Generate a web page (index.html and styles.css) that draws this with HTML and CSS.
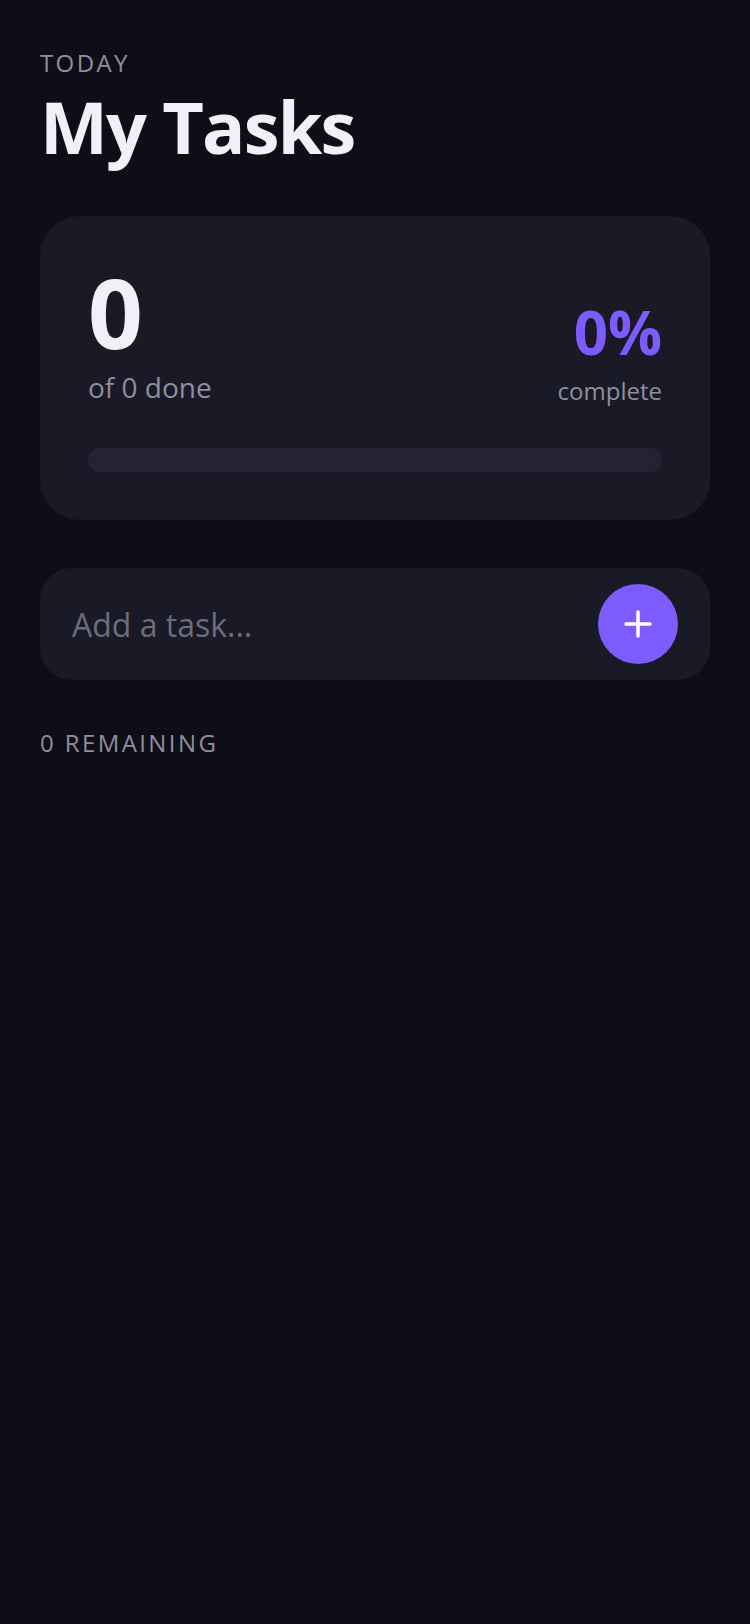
FILE: index.html
```html
<!DOCTYPE html>
<html>
<head>
  <meta charset="UTF-8">
  <title>My Tasks</title>
  <meta name="viewport" content="width=device-width, initial-scale=1">
  <link rel="stylesheet" href="styles.css">
</head>
<body>

  <div class="header">
    <div class="eyebrow">TODAY</div>
    <h1>My Tasks</h1>
  </div>

  <div class="card">
    <div class="stats">
      <div>
        <div class="count">0</div>
        <div class="count-label">of 0 done</div>
      </div>
      <div class="percent-box">
        <div class="percent">0%</div>
        <div class="percent-label">complete</div>
      </div>
    </div>
    <div class="track"></div>
  </div>

  <div class="add-row">
    <input type="text" placeholder="Add a task...">
    <button class="add-btn" aria-label="Add task">
      <svg width="32" height="32" viewBox="0 0 32 32">
        <path d="M16 4V28M4 16H28" stroke="#fff" stroke-width="3.5" stroke-linecap="round"/>
      </svg>
    </button>
  </div>

  <div class="remaining">0 REMAINING</div>

</body>
</html>
```

FILE: styles.css
```css
* {
  box-sizing: border-box;
}
body {
  margin: 0;
  min-height: 1624px;
  padding: 47px 40px 0;
  background: #0f0e17;
  font-family: 'Open Sans', sans-serif;
}
.eyebrow {
  font-size: 24px;
  line-height: 32px;
  letter-spacing: 2.4px;
  color: #8e8e9e;
}
h1 {
  margin: 0;
  font-size: 72px;
  line-height: 95px;
  font-weight: 700;
  letter-spacing: -1.8px;
  color: #f0f0fa;
}
.card {
  margin-top: 42px;
  padding: 48px;
  background: #1a1a26;
  border-radius: 40px;
}
.stats {
  display: flex;
  justify-content: space-between;
  align-items: flex-end;
}
.count {
  font-size: 96px;
  line-height: 96px;
  font-weight: 700;
  color: #f0f0fa;
}
.count-label {
  margin-top: 7px;
  padding-bottom: 1px;
  font-size: 28px;
  line-height: 40px;
  color: #8e8e9e;
}
.percent-box {
  text-align: right;
}
.percent {
  font-size: 60px;
  line-height: 72px;
  font-weight: 700;
  color: #7c5cfc;
}
.percent-label {
  margin-top: 6px;
  font-size: 24px;
  line-height: 34px;
  color: #8e8e9e;
}
.track {
  height: 24px;
  margin-top: 40px;
  background: #252233;
  border-radius: 12px;
}
.add-row {
  display: flex;
  align-items: center;
  margin-top: 48px;
  padding: 16px 32px;
  background: #1a1a26;
  border-radius: 32px;
}
input {
  flex: 1;
  min-width: 0;
  padding: 0;
  border: none;
  outline: none;
  background: none;
  font-family: inherit;
  font-size: 32px;
  color: #f0f0fa;
}
input::placeholder {
  color: #6c6c7c;
  opacity: 1;
}
.add-btn {
  display: flex;
  align-items: center;
  justify-content: center;
  width: 80px;
  height: 80px;
  padding: 0;
  border: none;
  border-radius: 50%;
  background: #7c5cfc;
  cursor: pointer;
}
.remaining {
  margin-top: 47px;
  font-size: 24px;
  line-height: 32px;
  letter-spacing: 2.4px;
  color: #8e8e9e;
}
```
